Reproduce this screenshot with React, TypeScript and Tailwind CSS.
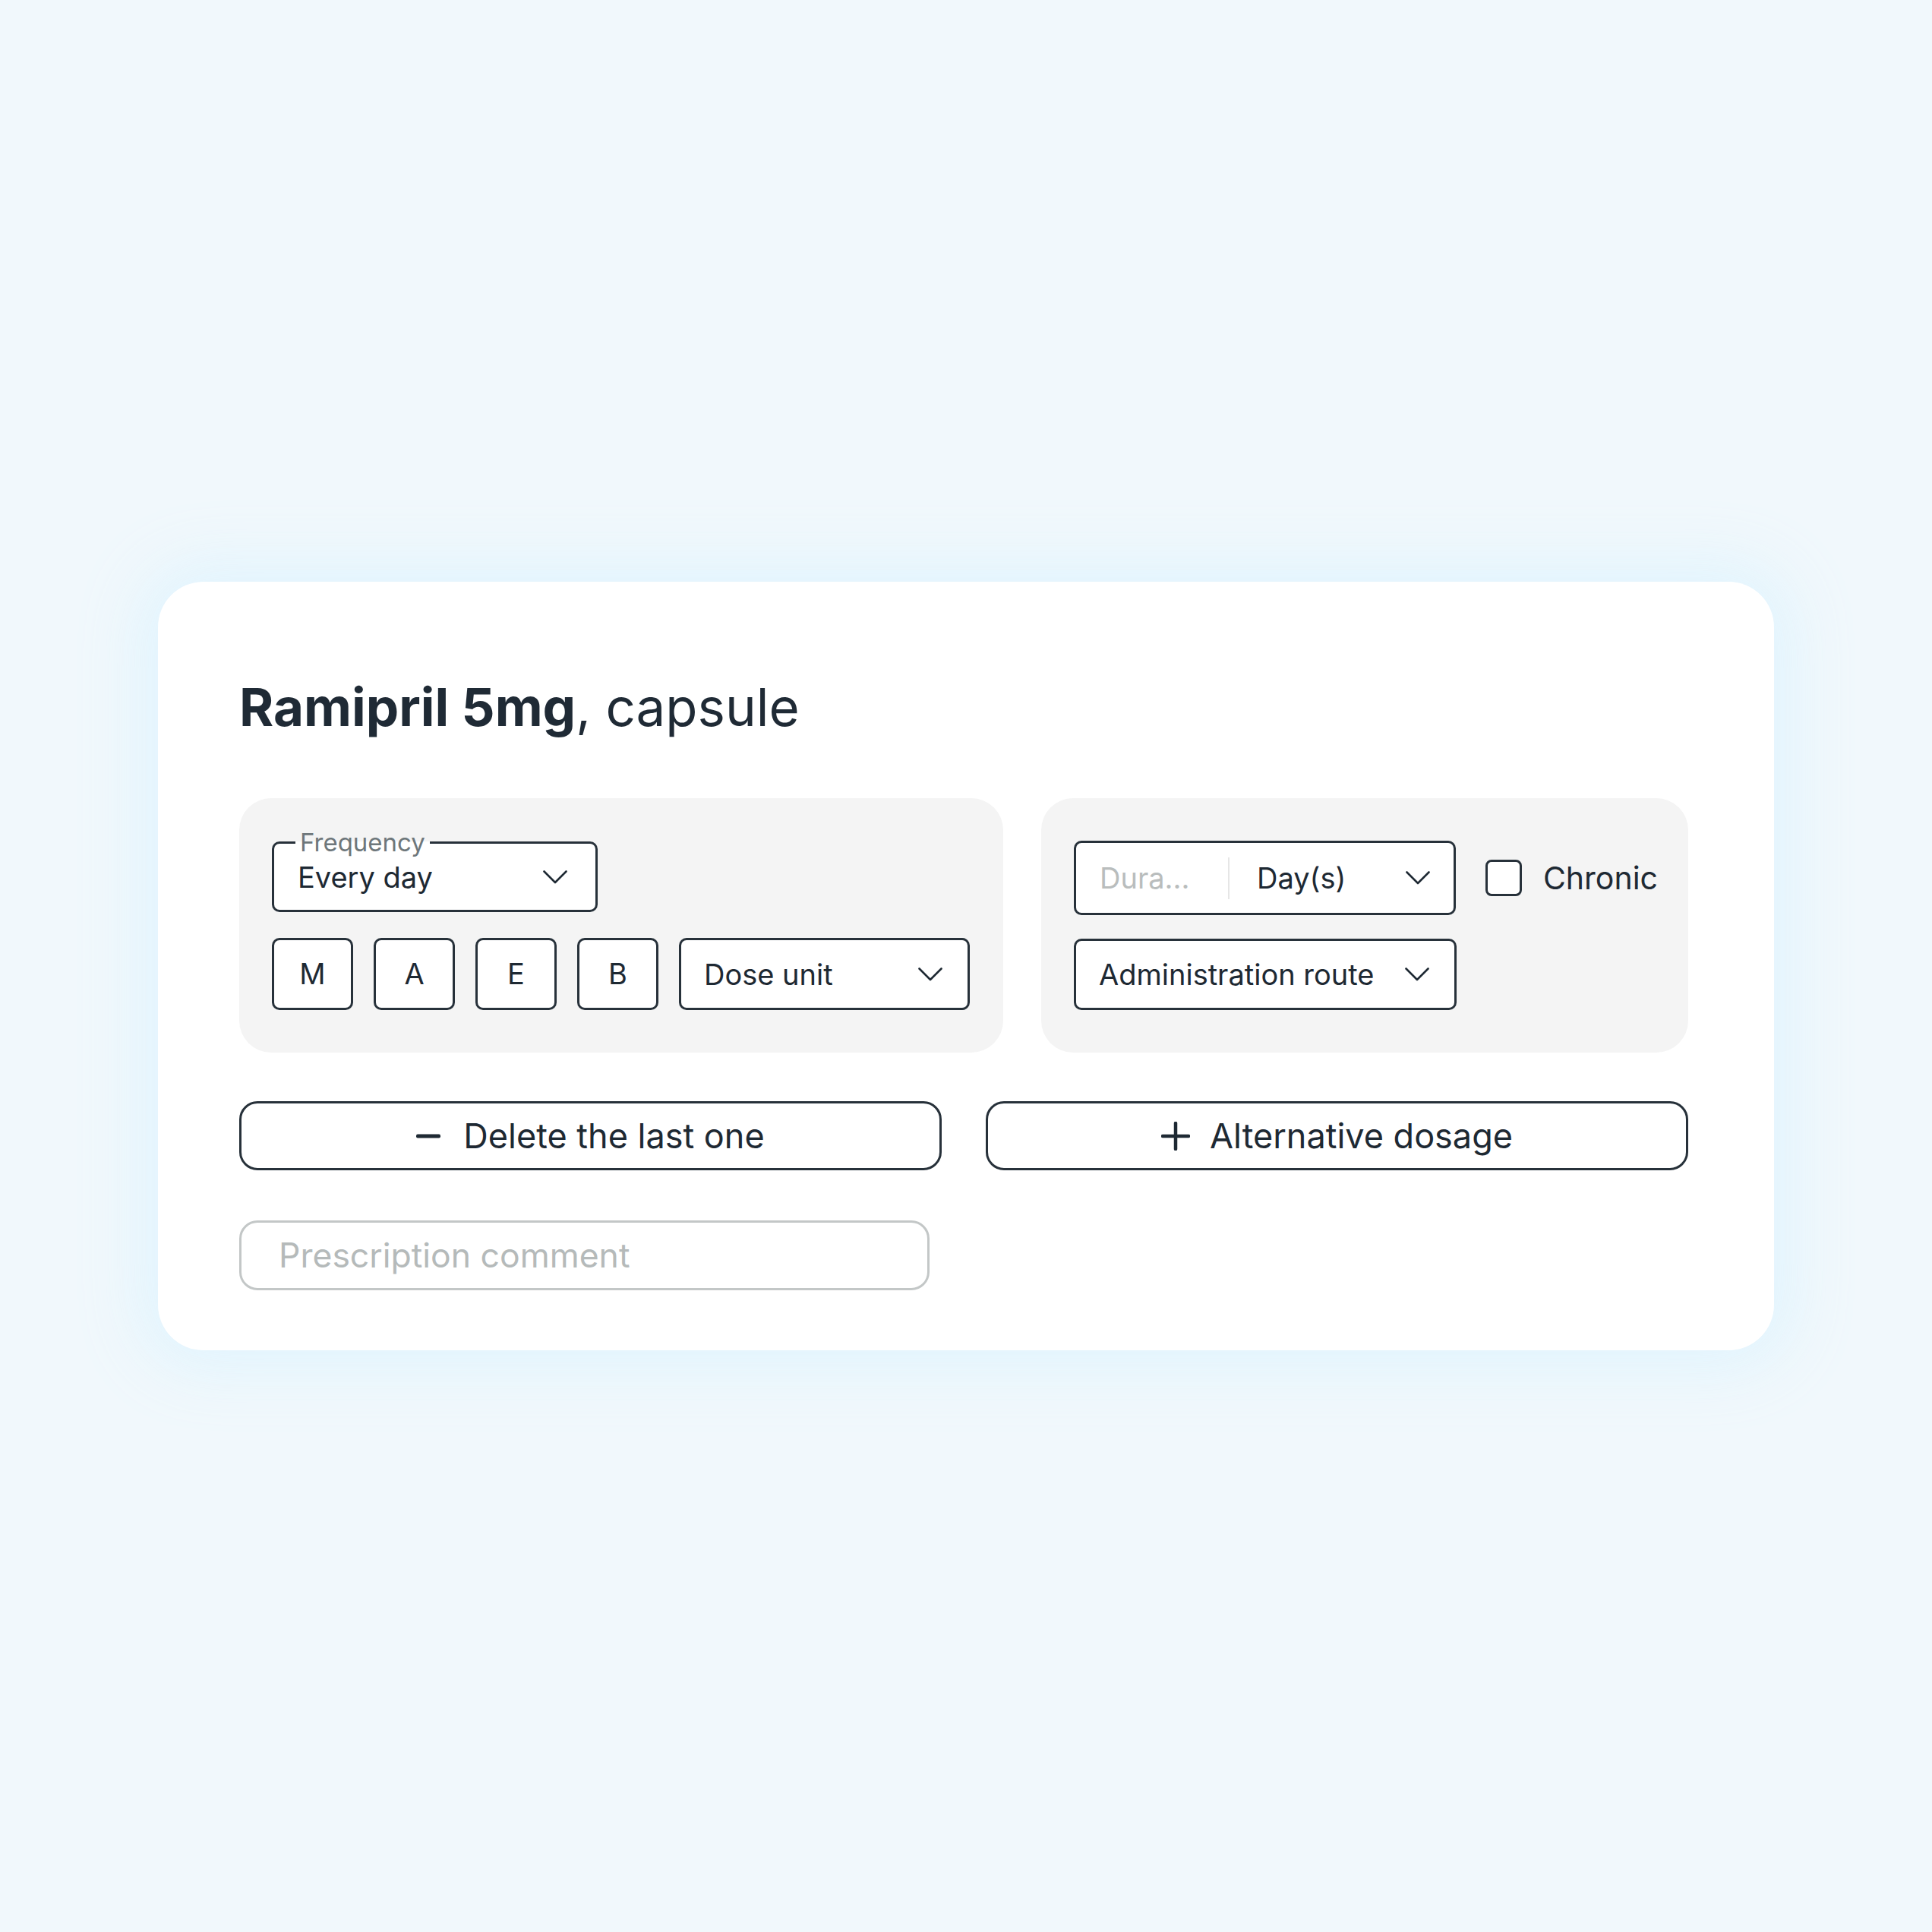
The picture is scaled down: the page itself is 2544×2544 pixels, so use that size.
import type { ReactNode } from "react";

function Chevron() {
  return (
    <svg width="32" height="18" viewBox="0 0 32 18" fill="none" className="shrink-0">
      <path
        d="M1.5 1.5L16 16L30.5 1.5"
        stroke="#1e2933"
        strokeWidth="2.6"
        strokeLinecap="round"
        strokeLinejoin="round"
      />
    </svg>
  );
}

function DoseBox({ label }: { label: string }) {
  return (
    <button className="flex h-[95px] w-[107px] items-center justify-center rounded-[10px] border-[3px] border-[#27313a] bg-white text-[38px] text-[#1e2933]">
      {label}
    </button>
  );
}

function Select({
  children,
  className,
}: {
  children: ReactNode;
  className?: string;
}) {
  return (
    <div
      className={`flex items-center justify-between rounded-[10px] border-[3px] border-[#27313a] bg-white pl-[30px] pr-[33px] text-[38px] text-[#1e2933] ${className ?? ""}`}
    >
      <span className="leading-none">{children}</span>
      <Chevron />
    </div>
  );
}

export default function App() {
  return (
    <div
      className="flex min-h-screen items-center justify-center bg-[#f1f8fc]"
      style={{ fontFamily: "Inter, 'Noto Sans', sans-serif" }}
    >
      <div className="w-[2128px] rounded-[60px] bg-white pb-[79px] pl-[107px] pr-[113px] pt-[131px] shadow-[0_0_80px_24px_rgba(222,243,254,0.85)]">
        <h1 className="text-[69px] leading-none text-[#1f2a35]">
          <span className="font-bold">Ramipril 5mg</span>, capsule
        </h1>

        <div className="mt-[85px] flex gap-[50px]">
          {/* dosage panel */}
          <div className="flex w-[1006px] flex-col rounded-[42px] bg-[#f4f4f4] pb-[56px] pl-[43px] pr-[44px] pt-[42px]">
            <fieldset className="w-[429px] rounded-[10px] border-[3px] border-[#27313a] bg-white">
              <legend className="ml-[28px] px-[6px] text-[33px] leading-[32px] text-[#6e777b]">
                Frequency
              </legend>
              <div className="flex h-[73px] items-center justify-between pb-[14px] pl-[31px] pr-[37px] text-[38px] text-[#1e2933]">
                <span className="leading-none">Every day</span>
                <Chevron />
              </div>
            </fieldset>

            <div className="mt-[34px] flex gap-[27px]">
              <DoseBox label="M" />
              <DoseBox label="A" />
              <DoseBox label="E" />
              <DoseBox label="B" />
              <Select className="h-[95px] flex-1">Dose unit</Select>
            </div>
          </div>

          {/* duration panel */}
          <div className="flex w-[852px] flex-col rounded-[42px] bg-[#f4f4f4] pb-[56px] pl-[43px] pr-[40px] pt-[56px]">
            <div className="flex items-center">
              <div className="flex h-[98px] w-[504px] items-center rounded-[10px] border-[3px] border-[#27313a] bg-white pr-[31px] text-[38px]">
                <span className="w-[200px] pl-[31px] leading-none text-[#b9bdbd]">
                  Dura...
                </span>
                <div className="h-[55px] w-[2px] bg-[#e6e6e6]" />
                <span className="ml-[36px] flex-1 leading-none text-[#1e2933]">
                  Day(s)
                </span>
                <Chevron />
              </div>
              <div className="ml-[39px] h-[48px] w-[48px] rounded-[8px] border-[3px] border-[#27313a] bg-white" />
              <span className="ml-[28px] text-[41px] leading-none text-[#1e2933]">
                Chronic
              </span>
            </div>
            <Select className="mt-[31px] h-[94px] w-[504px]">
              Administration route
            </Select>
          </div>
        </div>

        <div className="mt-[64px] grid grid-cols-2 gap-[58px]">
          <button className="flex h-[91px] items-center justify-center gap-[30px] rounded-[24px] border-[3px] border-[#27313a] bg-white text-[45px] text-[#1e2933]">
            <svg width="32" height="6" viewBox="0 0 32 6">
              <rect width="32" height="5" y="0.5" rx="2" fill="#1e2933" />
            </svg>
            <span className="leading-none">Delete the last one</span>
          </button>
          <button className="flex h-[91px] items-center justify-center gap-[26px] rounded-[24px] border-[3px] border-[#27313a] bg-white text-[45px] text-[#1e2933]">
            <svg width="38" height="38" viewBox="0 0 38 38" fill="none">
              <path
                d="M19 2V36M2 19H36"
                stroke="#1e2933"
                strokeWidth="4.5"
                strokeLinecap="round"
              />
            </svg>
            <span className="leading-none">Alternative dosage</span>
          </button>
        </div>

        <input
          placeholder="Prescription comment"
          className="mt-[66px] block h-[92px] w-[909px] rounded-[24px] border-[3px] border-[#c3c7c7] bg-white pl-[49px] text-[44.5px] text-[#1e2933] outline-none placeholder:text-[#b5baba]"
        />
      </div>
    </div>
  );
}
